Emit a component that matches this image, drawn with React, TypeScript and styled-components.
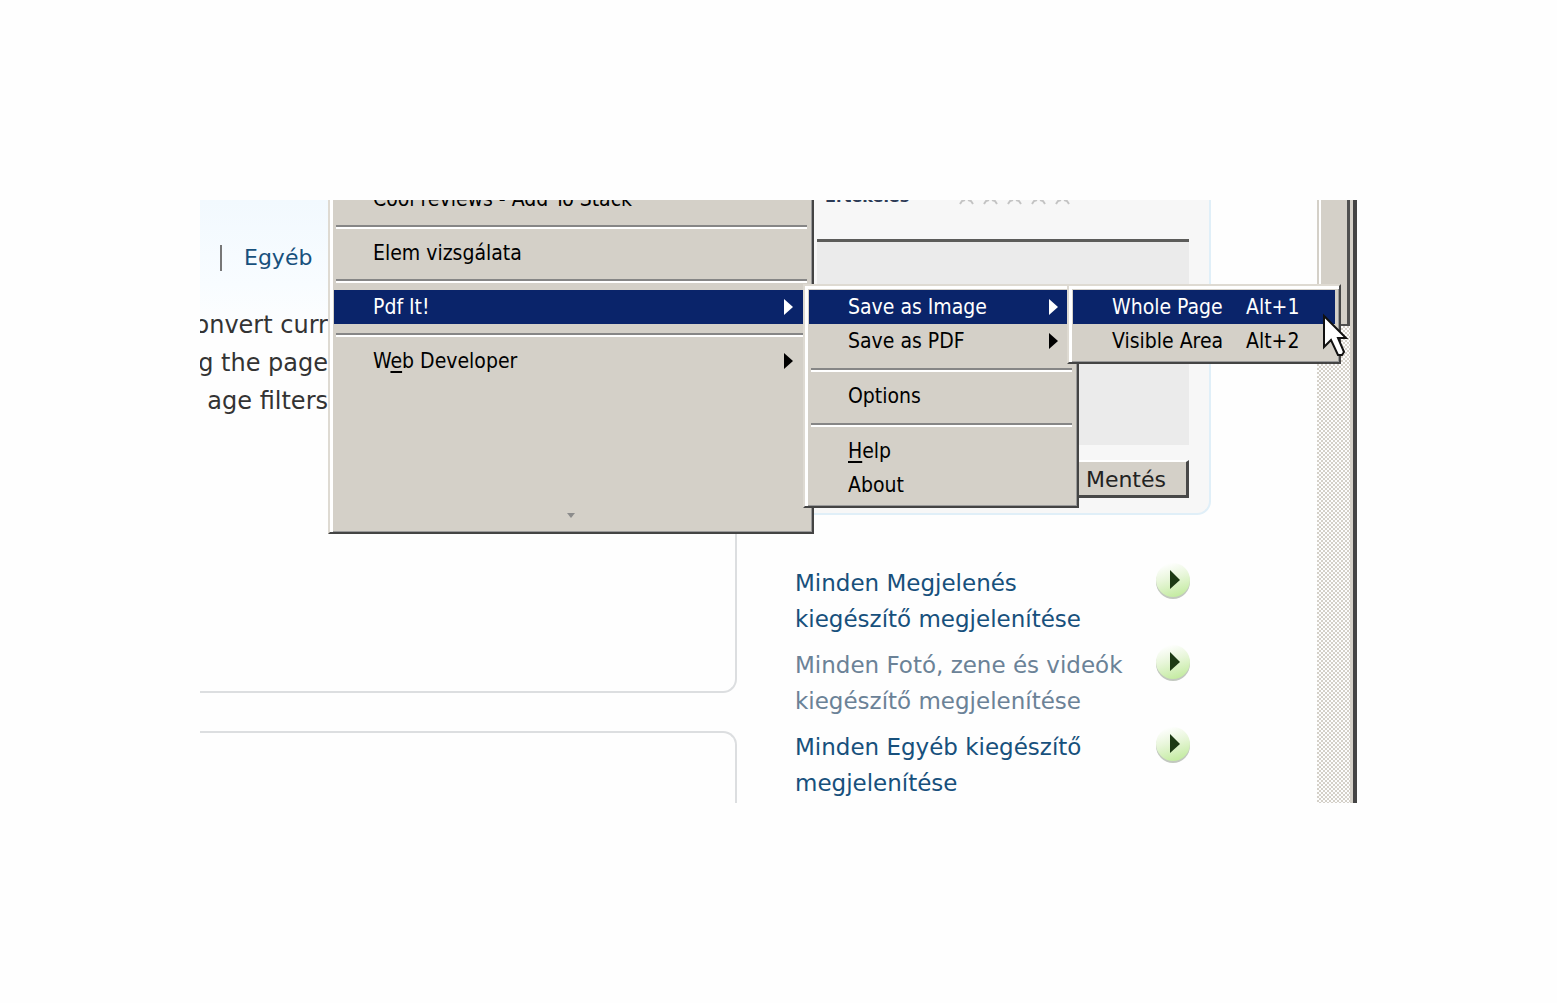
import React from 'react';
import styled, { createGlobalStyle } from 'styled-components';

const face = '#d4d0c8';
const pageFont = '"DejaVu Sans", Verdana, sans-serif';
const menuFont = '"DejaVu Sans Condensed", "DejaVu Sans", Tahoma, sans-serif';

const GlobalStyle = createGlobalStyle`
  * { box-sizing: border-box; }
  body { margin: 0; background: #fefefe; }
`;

const Page = styled.div`
  min-height: 100vh;
  padding: 200px;
  display: flex;
`;

const Screen = styled.main`
  position: relative;
  flex: 1;
  min-width: 0;
  height: calc(100vh - 400px);
  overflow: hidden;
  display: flex;
  font: 23px/36px ${pageFont};
  background: #fefefe;
`;

const Content = styled.div`
  flex: 0 0 537px;
  display: flex;
  flex-direction: column;
  gap: 38px;
`;

const Panel = styled.section<{ $open?: boolean }>`
  flex: ${p => (p.$open ? '1' : '0 0 493px')};
  border: 2px solid #dcdee0;
  border-left: 0;
  ${p => (p.$open
    ? 'border-bottom: 0; border-radius: 0 14px 0 0;'
    : 'border-top: 0; border-radius: 0 0 14px 0; background: linear-gradient(#f2f9fe, #f8fcff 84px, #fefefe 140px);')}
`;

const Tabs = styled.nav`
  display: flex;
  align-items: center;
  gap: 22px;
  padding: 40px 0 0 20px;
  font-size: 22px;
`;

const Divider = styled.span`
  width: 2px;
  height: 26px;
  background: #777;
`;

const Link = styled.a<{ $visited?: boolean }>`
  color: ${p => (p.$visited ? '#6b8297' : '#17507c')};
  text-decoration: none;
`;

const Summary = styled.p`
  width: 128px;
  margin: 30px 0 0;
  font-size: 24px;
  line-height: 38px;
  color: #333;
  display: flex;
  flex-direction: column;
  align-items: flex-end;
  white-space: nowrap;
`;

const Aside = styled.aside`
  flex: 1;
  min-width: 0;
  padding: 0 106px 0 58px;
`;

const Card = styled.form`
  height: 315px;
  padding: 0 20px 15px;
  border: 2px solid #e0eff8;
  border-top: 0;
  border-radius: 0 0 14px 14px;
  background: #f7f7f7;
  display: flex;
  flex-direction: column;
`;

const CardHead = styled.div`
  height: 39px;
  display: flex;
  align-items: flex-start;
  padding-left: 8px;
`;

const CardTitle = styled.strong`
  flex: 0 0 134px;
  height: 4px;
  display: flex;
  align-items: flex-end;
  font-size: 16px;
  line-height: 14px;
  color: #2c3a55;
`;

const Notes = styled.textarea`
  flex: 1;
  border: 0;
  border-top: 3px solid #5c5c5a;
  padding: 0;
  resize: none;
  background: #ebebeb;
`;

const Save = styled.button`
  align-self: flex-end;
  height: 38px;
  margin-top: 15px;
  padding: 2px 20px 0 24px;
  border: 2px solid #fff;
  border-right: 3px solid #484848;
  border-bottom: 3px solid #484848;
  background: ${face};
  color: #222;
  font: 22px/30px ${pageFont};
`;

const LinkList = styled.ul`
  list-style: none;
  margin: 50px 0 0;
  padding: 0 20px 0 0;
  display: flex;
  flex-direction: column;
  gap: 10px;
`;

const LinkRow = styled.li`
  display: flex;
  justify-content: space-between;
  align-items: flex-start;
  white-space: nowrap;
`;

const Go = styled.button`
  width: 38px;
  height: 38px;
  margin-top: -2px;
  padding: 0;
  border: 0;
  background: none;
`;

const Track = styled.div`
  flex: 0 0 40px;
  display: flex;
  border-right: 4px solid #444;
  background: ${face};
`;

const Groove = styled.div`
  flex: 0 0 33px;
  background: repeating-conic-gradient(#fdfdfd 0 25%, ${face} 0 50%) 0 0 / 4px 4px;
`;

const Thumb = styled.div`
  height: 126px;
  background: ${face};
  border-right: 3px solid #505050;
  border-bottom: 2px solid #505050;
  box-shadow: inset 2px 0 ${face}, inset 4px 0 #fff;
`;

const MenuBox = styled.div<{ $x: number; $y: number; $w: number; $h: number }>`
  position: absolute;
  left: ${p => p.$x}px;
  top: ${p => p.$y}px;
  width: ${p => p.$w}px;
  height: ${p => p.$h}px;
  padding: 4px;
  border: 2px solid #dedad2;
  border-right-color: #444;
  border-bottom-color: #444;
  box-shadow: inset 3px 3px #fff, inset -1px -1px #999;
  background: ${face};
  font: 21px/34px ${menuFont};
  color: #000;
  display: flex;
  flex-direction: column;
`;

const Separator = styled.hr<{ $gap: number }>`
  flex: none;
  width: calc(100% - 3px);
  height: 4px;
  margin: ${p => p.$gap}px 2px 7px;
  border: 0;
  border-top: 2px solid #868686;
  border-bottom: 2px solid #fff;
`;

const Item = styled.button<{ $active?: boolean }>`
  flex: none;
  display: flex;
  align-items: center;
  height: 34px;
  padding: 0 15px 0 39px;
  border: 0;
  background: ${p => (p.$active ? '#0a246a' : 'none')};
  color: ${p => (p.$active ? '#fff' : '#000')};
  font: inherit;
  text-align: left;
  white-space: nowrap;
`;

const Label = styled.span`
  flex: 1;
  u { text-underline-offset: 3px; text-decoration-thickness: 2px; }
`;

const Shortcut = styled.span`
  flex: 0 0 74px;
`;

const More = styled.div`
  margin: auto auto 10px;
  height: 5px;
  display: flex;
`;

const Pointer = styled.svg`
  position: absolute;
  left: 1122px;
  top: 113px;
`;

const Arrow = () => (
  <svg width="9" height="16" viewBox="0 0 9 16" fill="currentColor"><path d="M0 0L9 8L0 16Z" /></svg>
);

const Stars = () => (
  <svg width="114" height="5" viewBox="0 0 114 5" fill="none" stroke="#c4c4c4" strokeWidth="2">
    {[0, 24, 48, 72, 96].map(x => (
      <path key={x} d={`M${x + 1} 4L${x + 3} 1L${x + 6} 0M${x + 9} 0L${x + 12} 1L${x + 14} 4`} />
    ))}
  </svg>
);

const GoIcon = ({ id }: { id: string }) => (
  <svg width="38" height="38" viewBox="0 0 38 38">
    <defs>
      <linearGradient id={id} x1="0.3" y1="0" x2="0.6" y2="1">
        <stop offset="0.05" stopColor="#fdfefc" />
        <stop offset="0.45" stopColor="#e8f6da" />
        <stop offset="1" stopColor="#c3eba0" />
      </linearGradient>
    </defs>
    <circle cx="20" cy="19" r="17" fill="#a8b0a4" opacity="0.7" />
    <circle cx="20" cy="17" r="17" fill={`url(#${id})`} />
    <path d="M17 7L27 17L17 26Z" fill="#1d3a14" />
  </svg>
);

const links = [
  { lines: ['Minden Megjelenés', 'kiegészítő megjelenítése'] },
  { lines: ['Minden Fotó, zene és videók', 'kiegészítő megjelenítése'], visited: true },
  { lines: ['Minden Egyéb kiegészítő', 'megjelenítése'] },
];

export default function App() {
  return (
    <Page>
      <GlobalStyle />
      <Screen>
        <Content>
          <Panel>
            <Tabs><Divider /><Link href="#egyeb">Egyéb</Link></Tabs>
            <Summary>
              <span>onvert curr</span>
              <span>g the page</span>
              <span>age filters</span>
            </Summary>
          </Panel>
          <Panel $open />
        </Content>
        <Aside>
          <Card>
            <CardHead>
              <CardTitle>Értékelés</CardTitle>
              <Stars />
            </CardHead>
            <Notes aria-label="Megjegyzés" />
            <Save type="button">Mentés</Save>
          </Card>
          <LinkList>
            {links.map((l, i) => (
              <LinkRow key={i}>
                <Link href="#more" $visited={l.visited}>{l.lines[0]}<br />{l.lines[1]}</Link>
                <Go type="button" aria-label={l.lines.join(' ')}><GoIcon id={`go${i}`} /></Go>
              </LinkRow>
            ))}
          </LinkList>
        </Aside>
        <Track><Groove><Thumb /></Groove></Track>

        <MenuBox $x={128} $y={-24} $w={486} $h={358}>
          <Item><Label>Cool reviews - Add To Stack</Label></Item>
          <Separator $gap={9} />
          <Item><Label>Elem vizsgálata</Label></Item>
          <Separator $gap={9} />
          <Item $active><Label>Pdf It!</Label><Arrow /></Item>
          <Separator $gap={9} />
          <Item><Label>W<u>e</u>b Developer</Label><Arrow /></Item>
          <More><svg width="8" height="5" viewBox="0 0 8 5" fill="#8c8c8c"><path d="M0 0H8L4 5Z" /></svg></More>
        </MenuBox>

        <MenuBox $x={603} $y={84} $w={276} $h={224}>
          <Item $active><Label>Save as Image</Label><Arrow /></Item>
          <Item><Label>Save as PDF</Label><Arrow /></Item>
          <Separator $gap={10} />
          <Item><Label>Options</Label></Item>
          <Separator $gap={10} />
          <Item><Label><u>H</u>elp</Label></Item>
          <Item><Label>About</Label></Item>
        </MenuBox>

        <MenuBox $x={867} $y={84} $w={274} $h={80}>
          <Item $active><Label>Whole Page</Label><Shortcut>Alt+1</Shortcut></Item>
          <Item><Label>Visible Area</Label><Shortcut>Alt+2</Shortcut></Item>
        </MenuBox>

        <Pointer width="28" height="46" viewBox="0 0 28 46">
          <path d="M2 3V34L9 27L16 42L20 42L22 39L16 25H24Z" fill="#fff" stroke="#111" strokeWidth="2" />
        </Pointer>
      </Screen>
    </Page>
  );
}
